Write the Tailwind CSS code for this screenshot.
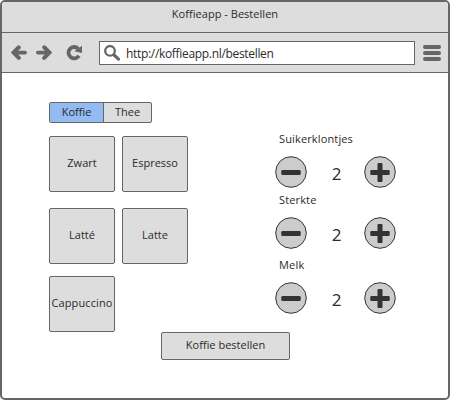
<!DOCTYPE html>
<html lang="nl">
<head>
<meta charset="utf-8">
<title>Koffieapp - Bestellen</title>
<script src="https://cdn.jsdelivr.net/npm/@tailwindcss/browser@4"></script>
</head>
<body class="bg-white">
<div class="flex h-[400px] w-[450px] flex-col overflow-hidden rounded-[5px] border-2 border-[#666] bg-white font-['Open_Sans','Noto_Sans',sans-serif] text-[11px] leading-4 whitespace-nowrap text-[#2b2b2b]">
  <header class="shrink-0 bg-[#ddd]">
    <div class="flex h-[31px] justify-center border-b border-[#666] pt-1"><span class="tracking-[0.03px]">Koffieapp - Bestellen</span></div>
    <div class="flex h-10 items-start border-b border-[#666] pt-2 pl-[9px]">
      <svg class="mt-1 mr-[9px] h-4 w-4 shrink-0" viewBox="0 0 16 16" fill="none" stroke="#666" stroke-width="4" stroke-linecap="round"><path d="M7.8 2.3 2.5 7.5 7.8 12.9"/><path d="M4 7.6H14.2" stroke-width="3.6"/></svg>
      <svg class="mt-1 h-4 w-4 shrink-0" viewBox="0 0 16 16" fill="none" stroke="#666" stroke-width="4" stroke-linecap="round"><path d="M8.2 2.3 13.5 7.5 8.2 12.9"/><path d="M12 7.6H1.8" stroke-width="3.6"/></svg>
      <svg class="mt-1 ml-[14px] h-4 w-[17px] shrink-0" viewBox="0 0 17 16"><path d="M12.2 3.6A5.7 5.7 0 1 0 13 10.8" fill="none" stroke="#666" stroke-width="3.8"/><path d="M16 .8V8L8.3 6.2Z" fill="#666"/></svg>
      <div class="ml-4 flex h-6 w-[316px] shrink-0 items-start border border-[#666] bg-white pl-1">
        <svg class="mt-[3px] h-[17px] w-[17px] shrink-0" viewBox="0 0 17 17" fill="none" stroke="#666"><circle cx="6" cy="5.9" r="4.8" stroke-width="2.3"/><path d="M9.8 9.8 14.5 14.1" stroke-width="3.2" stroke-linecap="round"/></svg>
        <span class="mt-1 ml-[5px] text-[12px] tracking-[-0.32px]">http://koffieapp.nl/bestellen</span>
      </div>
      <div class="mt-1 ml-2 flex w-[18px] flex-col gap-[2px]">
        <i class="h-1 rounded-full bg-[#666]"></i><i class="h-1 rounded-full bg-[#666]"></i><i class="h-1 rounded-full bg-[#666]"></i>
      </div>
    </div>
  </header>
  <main class="flex grow flex-col pt-[29px] pl-[47px]">
    <div class="flex h-[230px]">
      <section class="w-[226px]">
        <div class="flex h-[21px] w-[103px] overflow-hidden rounded-[2px] border border-[#666] bg-[#ddd] text-center">
          <div class="w-[54px] border-r border-[#666] bg-[#93baf3] pt-[1px]">Koffie</div>
          <div class="grow pt-[1px]">Thee</div>
        </div>
        <div class="mt-[13px] flex gap-[7px]">
          <button class="flex h-14 w-[66px] items-center justify-center rounded-[2px] border border-[#666] bg-[#ddd] pb-[2px]">Zwart</button>
          <button class="flex h-14 w-[66px] items-center justify-center rounded-[2px] border border-[#666] bg-[#ddd] pb-[2px]">Espresso</button>
        </div>
        <div class="mt-4 flex gap-[7px]">
          <button class="flex h-14 w-[66px] items-center justify-center rounded-[2px] border border-[#666] bg-[#ddd] pb-[2px]">Latté</button>
          <button class="flex h-14 w-[66px] items-center justify-center rounded-[2px] border border-[#666] bg-[#ddd] pb-[2px]">Latte</button>
        </div>
        <button class="mt-3 flex h-14 w-[66px] items-center justify-center rounded-[2px] border border-[#666] bg-[#ddd] pb-[2px] tracking-[0.1px]">Cappuccino</button>
      </section>
      <section class="w-[121px] pt-[29px]">
        <div class="h-[25px] pl-1 tracking-[0.14px]">Suikerklontjes</div>
        <div class="flex h-8 justify-between">
          <svg class="h-8 w-8" viewBox="0 0 32 32"><circle cx="16" cy="16" r="15.3" fill="#ccc" stroke="#333"/><rect x="6.3" y="14" width="19.4" height="5" rx="1.3" fill="#333"/></svg>
          <span class="pt-[2px] pl-[2px] text-[17px] leading-8">2</span>
          <svg class="h-8 w-8" viewBox="0 0 32 32"><circle cx="16" cy="16" r="15.3" fill="#ccc" stroke="#333"/><path d="M7.5 14H13.5V8Q13.5 7 14.5 7H17.5Q18.5 7 18.5 8V14H24.5Q25.7 14 25.7 15V18Q25.7 19 24.5 19H18.5V25Q18.5 26 17.5 26H14.5Q13.5 26 13.5 25V19H7.5Q6.3 19 6.3 18V15Q6.3 14 7.5 14Z" fill="#333"/></svg>
        </div>
        <div class="mt-1 h-[25px] pl-1 tracking-[0.14px]">Sterkte</div>
        <div class="flex h-8 justify-between">
          <svg class="h-8 w-8" viewBox="0 0 32 32"><circle cx="16" cy="16" r="15.3" fill="#ccc" stroke="#333"/><rect x="6.3" y="14" width="19.4" height="5" rx="1.3" fill="#333"/></svg>
          <span class="pt-[2px] pl-[2px] text-[17px] leading-8">2</span>
          <svg class="h-8 w-8" viewBox="0 0 32 32"><circle cx="16" cy="16" r="15.3" fill="#ccc" stroke="#333"/><path d="M7.5 14H13.5V8Q13.5 7 14.5 7H17.5Q18.5 7 18.5 8V14H24.5Q25.7 14 25.7 15V18Q25.7 19 24.5 19H18.5V25Q18.5 26 17.5 26H14.5Q13.5 26 13.5 25V19H7.5Q6.3 19 6.3 18V15Q6.3 14 7.5 14Z" fill="#333"/></svg>
        </div>
        <div class="mt-2 h-[25px] pl-1 tracking-[0.2px]">Melk</div>
        <div class="flex h-8 justify-between">
          <svg class="h-8 w-8" viewBox="0 0 32 32"><circle cx="16" cy="16" r="15.3" fill="#ccc" stroke="#333"/><rect x="6.3" y="14" width="19.4" height="5" rx="1.3" fill="#333"/></svg>
          <span class="pt-[2px] pl-[2px] text-[17px] leading-8">2</span>
          <svg class="h-8 w-8" viewBox="0 0 32 32"><circle cx="16" cy="16" r="15.3" fill="#ccc" stroke="#333"/><path d="M7.5 14H13.5V8Q13.5 7 14.5 7H17.5Q18.5 7 18.5 8V14H24.5Q25.7 14 25.7 15V18Q25.7 19 24.5 19H18.5V25Q18.5 26 17.5 26H14.5Q13.5 26 13.5 25V19H7.5Q6.3 19 6.3 18V15Q6.3 14 7.5 14Z" fill="#333"/></svg>
        </div>
      </section>
    </div>
    <button class="ml-28 flex h-7 w-[129px] items-center justify-center rounded-[2px] border border-[#666] bg-[#ddd] pb-[2px]">Koffie bestellen</button>
  </main>
</div>
</body>
</html>
